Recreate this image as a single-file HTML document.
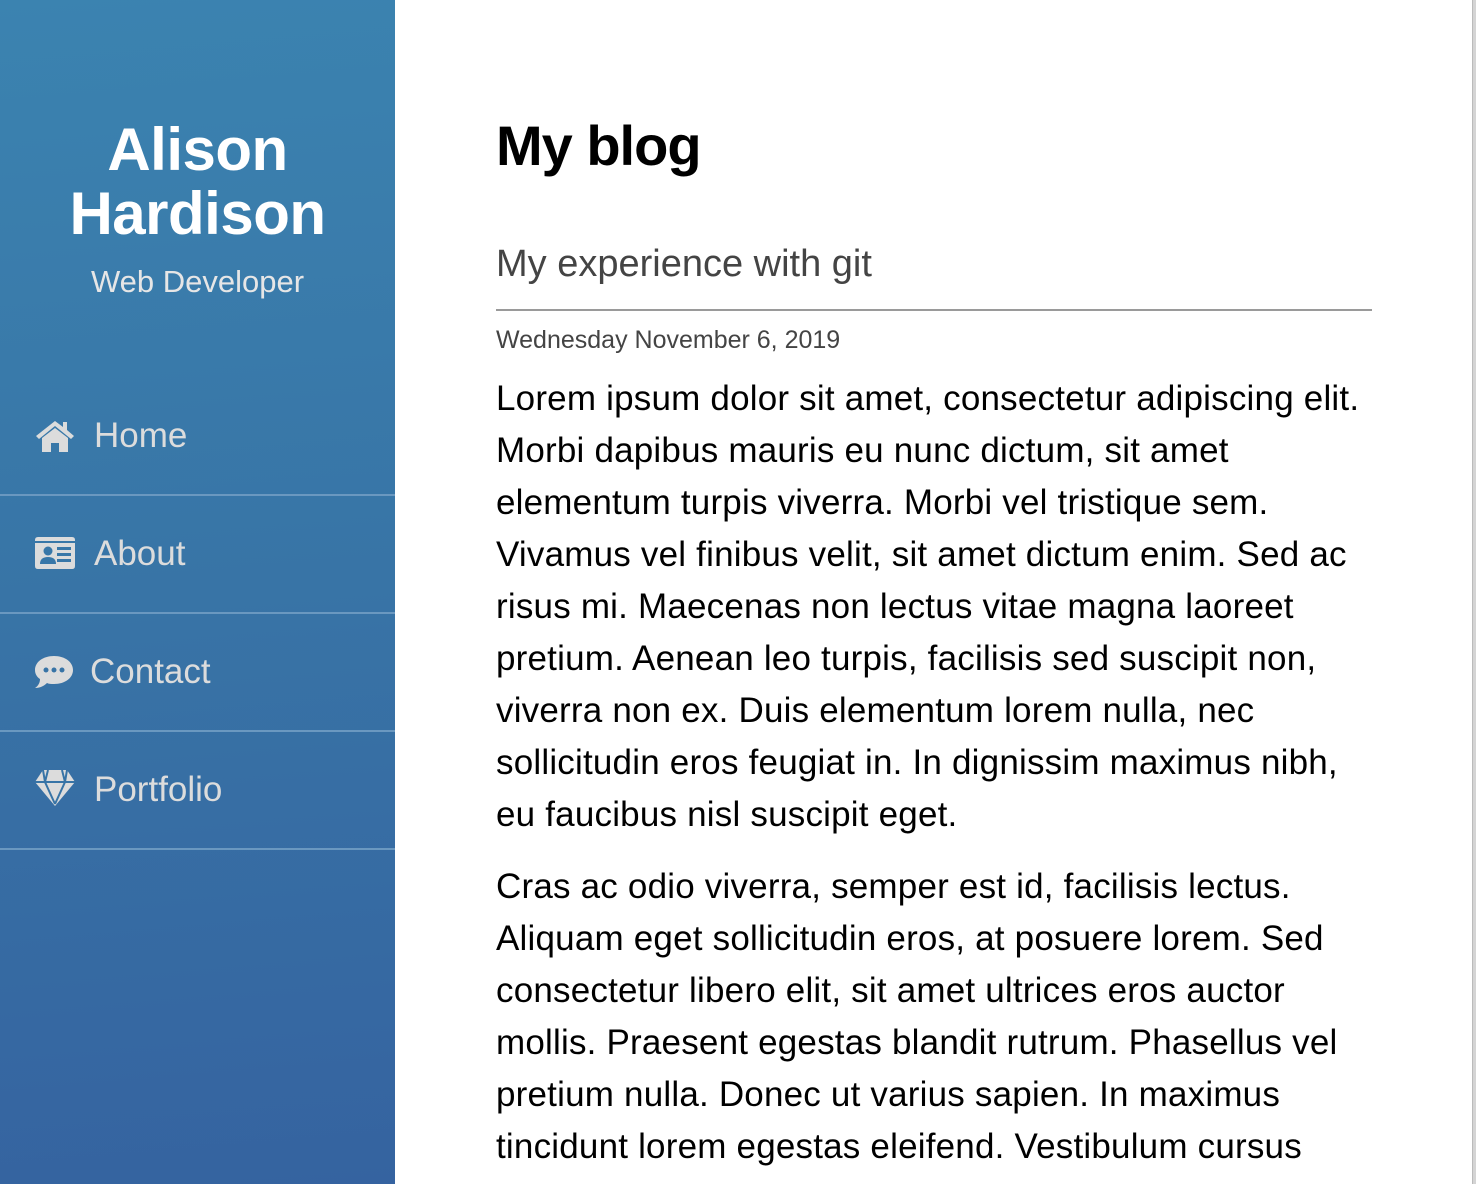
<!DOCTYPE html>
<html><head><meta charset="utf-8"><style>
*{margin:0;padding:0;box-sizing:border-box}
html,body{width:1476px;height:1184px;overflow:hidden;background:#fff;font-family:"Liberation Sans",sans-serif}
.side{position:absolute;left:0;top:0;width:395px;height:1184px;background:linear-gradient(175deg,#3b83b0 0%,#3874a6 50%,#3563a0 100%)}
.name{position:absolute;left:0;width:395px;text-align:center;color:#fff;font-weight:bold;font-size:60px;line-height:64px;top:118px;letter-spacing:-0.5px}
.role{position:absolute;left:0;width:395px;text-align:center;color:#e6e6e6;font-size:31px;top:264px}
.nav{position:absolute;left:0;width:395px;height:118px;border-bottom:2px solid #6a98c0;color:#dcdcdc;font-size:35px}
.nav svg{position:absolute;left:35px;fill:#dcdcdc}
.nav span{position:absolute;top:0;line-height:1}
.right{position:absolute;right:0;top:0;width:4px;height:1184px;background:#d4d4d4;border-left:1px solid #bbb}
h1{position:absolute;left:496px;top:113px;font-size:56px;font-weight:bold;color:#000;letter-spacing:-1px}
.sub{position:absolute;left:496px;top:243px;font-size:38px;color:#444}
.hr{position:absolute;left:496px;top:309px;width:876px;height:2px;background:#9a9a9a}
.date{position:absolute;left:496px;top:326px;font-size:25px;color:#444}
.p{position:absolute;left:496px;font-size:35px;line-height:52px;color:#000;white-space:nowrap;letter-spacing:0.2px}
</style></head><body>
<div class="side">
<div class="name">Alison<br>Hardison</div>
<div class="role">Web Developer</div>
<div class="nav" style="top:378px"><svg width="40" height="34" viewBox="0 0 40 34" style="top:40px"><path d="M20 3 L1 18 L4 21 L20 8 L36 21 L39 18 L32 12 L32 4 L28 4 L28 9 Z M7 20 L20 10 L33 20 L33 34 L24 34 L24 25 L16 25 L16 34 L7 34 Z"/></svg><span style="left:94px;top:40px">Home</span></div>
<div class="nav" style="top:496px"><svg width="40" height="32" viewBox="0 0 40 32" style="top:41px"><path d="M0 3 Q0 0 3 0 L37 0 Q40 0 40 3 L40 29 Q40 32 37 32 L3 32 Q0 32 0 29 Z" /><path fill="#3877a8" d="M0 4 L40 4 L40 6 L0 6 Z M22 10 L36 10 L36 13 L22 13 Z M22 16 L36 16 L36 19 L22 19 Z M22 22 L36 22 L36 25 L22 25 Z"/><circle cx="13" cy="14" r="4.5" fill="#3877a8"/><path fill="#3877a8" d="M5 27 Q5 20 13 20 Q21 20 21 27 Z"/></svg><span style="left:94px;top:40px">About</span></div>
<div class="nav" style="top:614px"><svg width="38" height="34" viewBox="0 0 38 34" style="top:41px"><path d="M19 1 C8 1 0 7 0 15 C0 19 2 22 5 24 C5 28 3 31 0 33 C6 33 10 30 12 28 C14 29 16 29 19 29 C30 29 38 23 38 15 C38 7 30 1 19 1 Z"/><circle cx="11" cy="15" r="2.5" fill="#3874a6"/><circle cx="19" cy="15" r="2.5" fill="#3874a6"/><circle cx="27" cy="15" r="2.5" fill="#3874a6"/></svg><span style="left:90px;top:40px">Contact</span></div>
<div class="nav" style="top:732px"><svg width="40" height="36" viewBox="0 0 40 36" style="top:38px"><path d="M8 0 L32 0 L40 12 L20 36 L0 12 Z"/><path stroke="#3874a6" stroke-width="2" fill="none" d="M0 12 L40 12 M13 0 L10 12 L20 34 M27 0 L30 12 L20 34 M8 0 L10 12 M32 0 L30 12"/></svg><span style="left:94px;top:40px">Portfolio</span></div>
</div>
<div class="right"></div>
<h1>My blog</h1>
<div class="sub">My experience with git</div>
<div class="hr"></div>
<div class="date">Wednesday November 6, 2019</div>
<div class="p" style="top:373px">Lorem ipsum dolor sit amet, consectetur adipiscing elit.<br>Morbi dapibus mauris eu nunc dictum, sit amet<br>elementum turpis viverra. Morbi vel tristique sem.<br>Vivamus vel finibus velit, sit amet dictum enim. Sed ac<br>risus mi. Maecenas non lectus vitae magna laoreet<br>pretium. Aenean leo turpis, facilisis sed suscipit non,<br>viverra non ex. Duis elementum lorem nulla, nec<br>sollicitudin eros feugiat in. In dignissim maximus nibh,<br>eu faucibus nisl suscipit eget.</div>
<div class="p" style="top:861px">Cras ac odio viverra, semper est id, facilisis lectus.<br>Aliquam eget sollicitudin eros, at posuere lorem. Sed<br>consectetur libero elit, sit amet ultrices eros auctor<br>mollis. Praesent egestas blandit rutrum. Phasellus vel<br>pretium nulla. Donec ut varius sapien. In maximus<br>tincidunt lorem egestas eleifend. Vestibulum cursus</div>
</body></html>
